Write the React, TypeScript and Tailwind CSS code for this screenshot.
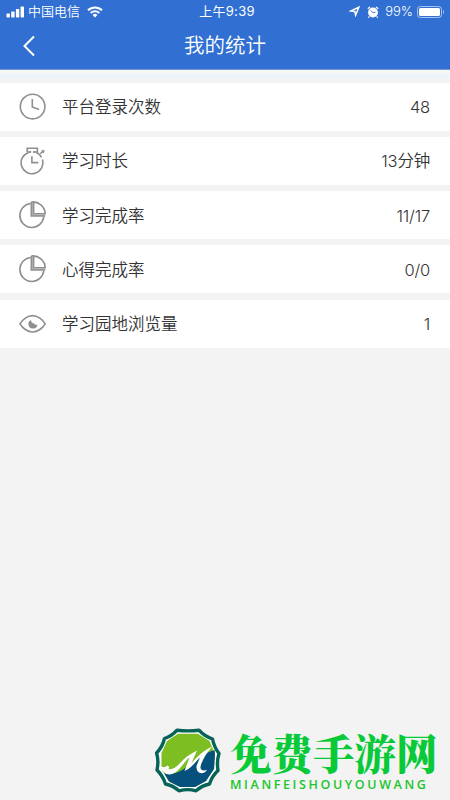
import type { ReactNode } from 'react'

interface Stat {
  label: string
  value: string
  icon: ReactNode
}

const iconProps = {
  width: 28,
  height: 28,
  viewBox: '0 0 28 28',
  fill: 'none',
  stroke: '#8f8f8f',
  strokeWidth: 1.6,
}

function ClockIcon() {
  return (
    <svg {...iconProps}>
      <circle cx="13.6" cy="13.6" r="12.3" />
      <path d="M13.3 6V14L20 16.4" />
    </svg>
  )
}

function StopwatchIcon() {
  return (
    <svg {...iconProps}>
      <path d="M9.6 5.4A10.9 10.9 0 1 0 23.4 12.6M17.2 5.6A10.9 10.9 0 0 1 22.6 10.4" />
      <path d="M12.9 9.2V15.6H19.3" />
      <path d="M11.3 4V6M14.9 4V6M8.2 5V1.2H18.4V5H15M11.2 5H8.2" />
      <path d="M21.4 6.6L24.5 3.8" />
      <path d="M22.2 2.8L25.8 3.4L24.6 6.4Z" fill="#8f8f8f" stroke="none" />
    </svg>
  )
}

function PieIcon() {
  return (
    <svg {...iconProps}>
      <path d="M11.6 2.5A12 12 0 1 0 24.8 15.6" />
      <path d="M12.3 1V14.9H26.2" />
      <path d="M14.6 1V12.8H26.2A12.300 12.300 0 0 0 12.300 1Z" />
      <path d="M13.4 1.500V13.900H26" stroke="#a8a8a8" strokeWidth="1" />
    </svg>
  )
}

function EyeIcon() {
  return (
    <svg {...iconProps}>
      <path d="M1 13.800C3.500 9.500 8.500 5.600 13.600 5.600S23.700 9.500 26.200 13.800C23.700 18.100 18.700 22 13.600 22S3.500 18.100 1 13.800Z" />
      <path
        d="M12 10A4.500 4.500 0 1 0 18.400 14.400C16.400 15.400 15.600 14.600 15.400 13.400C13.600 13.400 12 12.400 12 10Z"
        fill="#8f8f8f"
        stroke="none"
      />
    </svg>
  )
}

const stats: Stat[] = [
  { label: '平台登录次数', value: '48', icon: <ClockIcon /> },
  { label: '学习时长', value: '13分钟', icon: <StopwatchIcon /> },
  { label: '学习完成率', value: '11/17', icon: <PieIcon /> },
  { label: '心得完成率', value: '0/0', icon: <PieIcon /> },
  { label: '学习园地浏览量', value: '1', icon: <EyeIcon /> },
]

function StatusBar() {
  return (
    <div className="grid h-[23px] grid-cols-3 items-center pr-[5px] pl-[6px] text-[13px] leading-[23px]">
      <div className="flex items-center">
        <svg width="18" height="12" viewBox="0 0 18 12" fill="#fff">
          <rect x="0.5" y="7.5" width="3.4" height="4" rx="0.7" />
          <rect x="5.2" y="5.5" width="3.4" height="6" rx="0.7" />
          <rect x="9.9" y="3" width="3.4" height="8.5" rx="0.7" />
          <rect x="14.6" y="0.5" width="3.4" height="11" rx="0.7" />
        </svg>
        <span className="ml-[4px] font-[350]">中国电信</span>
        <svg className="ml-[7px]" width="16" height="12" viewBox="0 0 16 12" fill="none" stroke="#fff" strokeWidth="2">
          <path d="M1 4.3A10 10 0 0 1 15 4.3" />
          <path d="M3.7 7A6.2 6.2 0 0 1 12.3 7" />
          <path d="M8 11.5L5.6 9A3.5 3.5 0 0 1 10.4 9Z" fill="#fff" stroke="none" />
        </svg>
      </div>
      <div className="pl-[3px] text-center tracking-[0.3px]">上午9:39</div>
      <div className="flex items-center justify-end">
        <svg width="11" height="11" viewBox="0 0 11 11" fill="none" stroke="#fff" strokeWidth="1.5">
          <path d="M9.800 1.200L6.600 9.200L5.800 5.400L1.600 5Z" />
        </svg>
        <svg className="ml-[7px]" width="12" height="12" viewBox="0 0 12 12" fill="none" stroke="#fff">
          <circle cx="6" cy="6.5" r="4.9" fill="#fff" stroke="none" />
          <path d="M0.8 2.8L3 0.9M11.2 2.8L9 0.9M2.4 10.4L1.4 11.6M9.6 10.4L10.6 11.6" strokeWidth="1.3" />
          <path d="M3.8 4.4L6 6.900L8.500 6" stroke="#3170d2" strokeWidth="0.900" />
        </svg>
        <span className="ml-[6px] text-[13px] font-light">99%</span>
        <svg className="ml-[4px]" width="28" height="12" viewBox="0 0 28 12" fill="none">
          <rect x="0.5" y="0.5" width="24" height="11" rx="2.8" stroke="#a6c3f0" />
          <rect x="2" y="2" width="21" height="8" rx="1.5" fill="#fff" />
          <path d="M26 4V8C27.4 7.4 27.4 4.6 26 4Z" fill="#a6c3f0" />
        </svg>
      </div>
    </div>
  )
}

function SiteLogo() {
  return (
    <svg width="68" height="66" viewBox="0 0 68 66">
      <path
        d="M23 2.200Q34 3.500 45 2.200Q50 8 58.500 11Q60 19 65 25.500Q62.500 33 64 42.500Q58 48 55.500 56Q48 57.500 42 62.800Q34 60.500 25 62.800Q19 57.500 11.500 56Q9 48 3 42Q5 33 2.600 25Q8.500 19 10.500 10.500Q18 8 23 2.200Z"
        fill="#fff"
        stroke="#066357"
        strokeWidth="3.400"
        strokeLinejoin="round"
      />
      <path d="M24 5.800H44L55.500 13L61 26L60 41L52 53L41 59H26L15 53.500L7.500 41V25L13 13Z" fill="#7dbe22" />
      <path d="M10 45C22 49 34 39 47 27L60.500 22L61 26L60 41L52 53L41 59H26L15 53.500Z" fill="#05507c" />
      <path
        d="M6 37.500Q10 41 13.500 37.500Q16 38.500 14.500 41C20 42.500 25 36 30 31C34 27.500 38 25 43 22.500L37.500 35C44 28 49 23 58 18.500C52 26 47.500 33 46.500 39Q46 43.500 53 42C49 47.500 42 46 42.500 38L46 29.500C41 34 38 40 30.500 43L35.500 29.500C29 34 25.500 45 16 46.500Q9 47 6 37.500Z"
        fill="#fff"
      />
    </svg>
  )
}

export default function App() {
  return (
    <div className="flex h-[800px] w-[450px] flex-col overflow-hidden bg-[#f3f3f3] font-['Inter','Noto_Sans_CJK_SC',sans-serif]">
      <header className="h-[70px] border-b border-[#7595cf] bg-[#3170d2] text-white">
        <StatusBar />
        <div className="grid h-[46px] grid-cols-[60px_1fr_60px] items-center">
          <svg className="ml-[21px]" width="16" height="22" viewBox="0 0 16 22" fill="none" stroke="#fff" strokeWidth="2">
            <path d="M13 1.500L3.500 11L13 20.500" />
          </svg>
          <h1 className="text-center text-[20.500px] leading-[46px] font-[350]">我的统计</h1>
        </div>
      </header>

      <div className="h-[8px] border-t-4 border-[#f6f7f9] bg-[#ebf4fa]" />

      <main className="mt-[4.500px] flex flex-col gap-[6.300px]">
        {stats.map((stat) => (
          <div
            key={stat.label}
            className="flex h-[48px] items-center bg-white pr-[20px] pl-[19px] text-[16.500px] leading-[24px] font-[350] text-[#333]"
          >
            {stat.icon}
            <span className="ml-[15px] pt-px">{stat.label}</span>
            <span className="ml-auto pt-px tracking-[-0.200px]">{stat.value}</span>
          </div>
        ))}
      </main>

      <footer className="mt-auto flex h-[72px] items-start pl-[154px]">
        <SiteLogo />
        <div className="ml-[8px] whitespace-nowrap">
          <div className="h-[50px] font-['Noto_Serif_CJK_SC','Source_Han_Serif_SC','Noto_Sans_CJK_SC',serif] text-[41.500px] leading-[48px] font-black text-[#08ca38]">
            免费手游网
          </div>
          <div className="font-['Open_Sans',sans-serif] text-[12.500px] leading-[14px] font-semibold tracking-[2.600px] text-[#20c52c]">
            MIANFEISHOUYOUWANG
          </div>
        </div>
      </footer>
    </div>
  )
}
